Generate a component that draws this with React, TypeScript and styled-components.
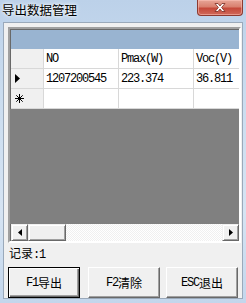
import React from 'react'
import styled, { createGlobalStyle } from 'styled-components'

const GlobalStyle = createGlobalStyle`
  html, body {
    margin: 0;
    padding: 0;
    width: 246px;
    height: 303px;
    overflow: hidden;
    background: #cfdff0;
  }
`

const cjk = `"Noto Sans CJK SC", "Noto Sans", sans-serif`
const mono = `"Liberation Mono", "DejaVu Sans Mono", monospace`

const columns = [
  { key: 'no', title: 'NO', width: 75 },
  { key: 'pmax', title: 'Pmax(W)', width: 75 },
  { key: 'voc', title: 'Voc(V)', width: 75 },
]

const rows = [{ no: '1207200545', pmax: '223.374', voc: '36.811' }]

const buttons = [
  { key: 'F1', label: '导出', isDefault: true },
  { key: 'F2', label: '清除', isDefault: false },
  { key: 'ESC', label: '退出', isDefault: false },
]

export default function App() {
  return (
    <>
      <GlobalStyle />
      <Window>
        <TitleBar>
          <Title>导出数据管理</Title>
          <CloseButton>
            <svg width="14" height="11" viewBox="0 0 14 11">
              <path
                d="M2 1.5 L5 1.5 L7 4 L9 1.5 L12 1.5 L8.6 5.5 L12 9.5 L9 9.5 L7 7 L5 9.5 L2 9.5 L5.4 5.5 Z"
                fill="#fff"
                stroke="#7a2a20"
                strokeWidth="0.8"
                strokeLinejoin="round"
              />
            </svg>
          </CloseButton>
        </TitleBar>
        <Client>
          <Grid>
            <Caption />
            <Row>
              <RowHeader />
              {columns.map((c) => (
                <Cell key={c.key} $width={c.width}>
                  <Latin>{c.title}</Latin>
                </Cell>
              ))}
            </Row>
            {rows.map((r, i) => (
              <Row key={i}>
                <RowHeader>
                  <svg width="5" height="9" viewBox="0 0 5 9">
                    <path d="M0 0 L5 4.5 L0 9 Z" fill="#000" />
                  </svg>
                </RowHeader>
                {columns.map((c) => (
                  <Cell key={c.key} $width={c.width}>
                    <Latin>{r[c.key as keyof typeof r]}</Latin>
                  </Cell>
                ))}
              </Row>
            ))}
            <Row>
              <RowHeader>
                <svg width="9" height="9" viewBox="0 0 9 9">
                  <g stroke="#000" strokeWidth="1">
                    <line x1="4.5" y1="0" x2="4.5" y2="9" />
                    <line x1="0" y1="4.5" x2="9" y2="4.5" />
                    <line x1="1.3" y1="1.3" x2="7.7" y2="7.7" />
                    <line x1="7.7" y1="1.3" x2="1.3" y2="7.7" />
                  </g>
                </svg>
              </RowHeader>
              {columns.map((c) => (
                <Cell key={c.key} $width={c.width} />
              ))}
            </Row>
            <Workspace />
            <HScroll>
              <ArrowButton>
                <svg width="4" height="7" viewBox="0 0 4 7">
                  <path d="M4 0 L0 3.5 L4 7 Z" fill="#000" />
                </svg>
              </ArrowButton>
              <Thumb />
              <Track />
              <ArrowButton>
                <svg width="4" height="7" viewBox="0 0 4 7">
                  <path d="M0 0 L4 3.5 L0 7 Z" fill="#000" />
                </svg>
              </ArrowButton>
            </HScroll>
          </Grid>
          <Status>
            记录<Latin>:1</Latin>
          </Status>
          <ButtonRow>
            {buttons.map((b) => (
              <Button key={b.key} $default={b.isDefault}>
                <Latin>{b.key}</Latin>
                {b.label}
              </Button>
            ))}
          </ButtonRow>
        </Client>
      </Window>
    </>
  )
}

const Window = styled.div`
  width: 246px;
  height: 303px;
  display: flex;
  flex-direction: column;
  background: linear-gradient(180deg, #bcd1e9 0%, #cadcef 30%, #d6e4f3 70%, #c3d6ec 100%);
  box-sizing: border-box;
`

const TitleBar = styled.div`
  height: 22px;
  display: flex;
  align-items: flex-start;
  justify-content: space-between;
  padding-left: 2px;
  padding-right: 3px;
  flex-shrink: 0;
`

const Title = styled.div`
  font-family: ${cjk};
  font-size: 12.5px;
  line-height: 20px;
  color: #000;
  text-shadow: 0 0 5px rgba(255, 255, 255, 0.95), 0 0 3px rgba(255, 255, 255, 0.9);
`

const CloseButton = styled.div`
  width: 46px;
  height: 16px;
  box-sizing: border-box;
  display: flex;
  align-items: center;
  justify-content: center;
  border: 1px solid #8d3a30;
  border-top: none;
  border-radius: 0 0 4px 4px;
  background: linear-gradient(180deg, #e7a597 0%, #d9806f 45%, #c5493a 55%, #d0695a 100%);
  box-shadow: inset 0 0 0 1px rgba(255, 200, 190, 0.5);
`

const Client = styled.div`
  flex: 1;
  margin: 0 3px 5px 3px;
  padding: 4px 3px 0 4px;
  background: #f0f0f0;
  border: 1px solid #9aa9ba;
  display: flex;
  flex-direction: column;
`

const Grid = styled.div`
  width: 233px;
  height: 216px;
  flex-shrink: 0;
  box-sizing: border-box;
  border-style: solid;
  border-width: 2px;
  border-color: #a0a0a0 #ffffff #ffffff #a0a0a0;
  box-shadow: inset 1px 1px 0 #696969;
  background: #808080;
  display: flex;
  flex-direction: column;
  overflow: hidden;
`

const Caption = styled.div`
  height: 19px;
  flex-shrink: 0;
  background: #99b4d1;
  margin-left: 1px;
  margin-top: 1px;
`

const Row = styled.div`
  display: flex;
  height: 20px;
  flex-shrink: 0;
  margin-left: 1px;
  background: #ffffff;
`

const RowHeader = styled.div`
  width: 33px;
  flex-shrink: 0;
  box-sizing: border-box;
  background: #f0f0f0;
  border-right: 1px solid #d8d8d8;
  border-bottom: 1px solid #d8d8d8;
  display: flex;
  align-items: center;
  padding-left: 4px;
`

const Cell = styled.div<{ $width: number }>`
  width: ${(p) => p.$width}px;
  flex-shrink: 0;
  box-sizing: border-box;
  border-right: 1px solid #d8d8d8;
  border-bottom: 1px solid #d8d8d8;
  display: flex;
  align-items: center;
  padding-left: 2px;
  white-space: nowrap;
  overflow: hidden;
`

const Latin = styled.span`
  font-family: ${mono};
  font-size: 12px;
  letter-spacing: -1.2px;
  color: #000;
`

const Workspace = styled.div`
  flex: 1;
  background: #808080;
`

const HScroll = styled.div`
  height: 17px;
  flex-shrink: 0;
  display: flex;
  margin-left: 1px;
  background: #f0f0f0;
`

const raised = `
  box-sizing: border-box;
  background: #f0f0f0;
  border-style: solid;
  border-width: 1px;
  border-color: #f0f0f0 #696969 #696969 #f0f0f0;
  box-shadow: inset 1px 1px 0 #ffffff, inset -1px -1px 0 #a0a0a0;
`

const ArrowButton = styled.div`
  ${raised}
  width: 17px;
  height: 17px;
  flex-shrink: 0;
  display: flex;
  align-items: center;
  justify-content: center;
`

const Thumb = styled.div`
  ${raised}
  width: 38px;
  height: 17px;
  flex-shrink: 0;
`

const Track = styled.div`
  flex: 1;
  background-color: #f0f0f0;
  background-image: repeating-conic-gradient(#ffffff 0 25%, #f0f0f0 0 50%);
  background-size: 2px 2px;
`

const Status = styled.div`
  font-family: ${cjk};
  font-size: 12px;
  line-height: 19px;
  padding-left: 1px;
  color: #000;
`

const ButtonRow = styled.div`
  display: flex;
  gap: 8px;
  margin-top: 2px;
`

const Button = styled.div<{ $default: boolean }>`
  width: 72px;
  height: 31px;
  box-sizing: border-box;
  display: flex;
  align-items: center;
  justify-content: center;
  font-family: ${cjk};
  font-size: 12px;
  color: #000;
  background: #f0f0f0;
  border-style: solid;
  border-width: 1px;
  border-color: ${(p) => (p.$default ? '#000 #000 #000 #000' : '#ffffff #696969 #696969 #ffffff')};
  box-shadow: ${(p) =>
    p.$default
      ? 'inset 1px 1px 0 #ffffff, inset -1px -1px 0 #696969, inset -2px -2px 0 #a0a0a0'
      : 'inset -1px -1px 0 #a0a0a0'};
  &:nth-child(3) {
    margin-left: -2px;
  }
`
